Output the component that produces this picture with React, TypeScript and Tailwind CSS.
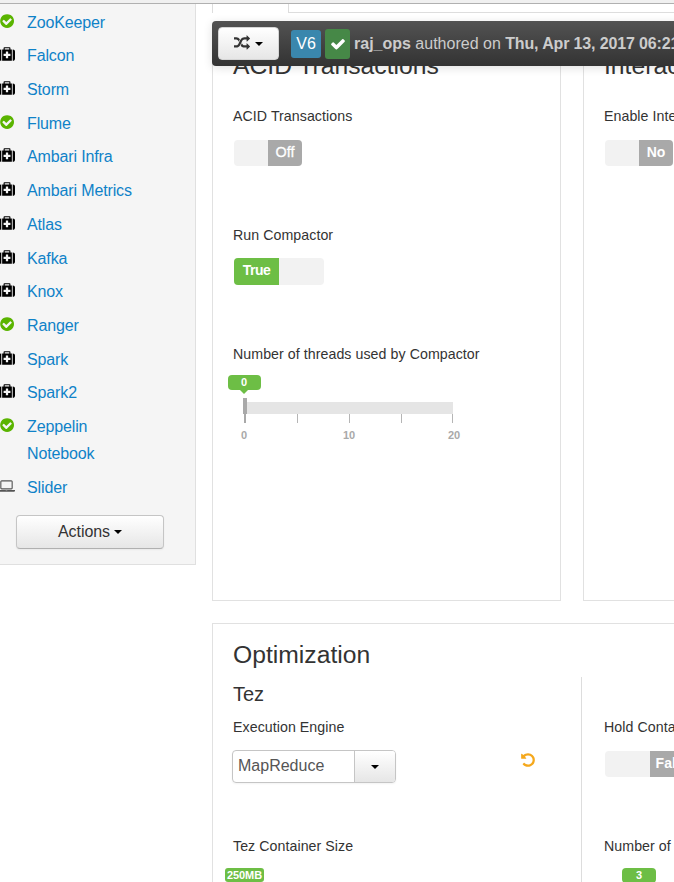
import React from "react";

const MEDKIT =
  "M1280 1088v-192q0-14-9-23t-23-9h-224v-224q0-14-9-23t-23-9h-192q-14 0-23 9t-9 23v224h-224q-14 0-23 9t-9 23v192q0 14 9 23t23 9h224v224q0 14 9 23t23 9h192q14 0 23-9t9-23v-224h224q14 0 23-9t9-23zM640 384h512v-128h-512v128zM256 384v1280h-32q-92 0-158-66t-66-158v-832q0-92 66-158t158-66h32zM1440 384v1280h-1088v-1280h160v-160q0-40 28-68t68-28h576q40 0 68 28t28 68v160h160zM1792 608v832q0 92-66 158t-158 66h-32v-1280h32q92 0 158 66t66 158z";
const CHECK_CIRCLE =
  "M1412 734q0-28-18-46l-91-90q-19-19-45-19t-45 19l-408 407-226-226q-19-19-45-19t-45 19l-91 90q-18 18-18 46 0 27 18 45l362 362q19 19 45 19 27 0 46-19l543-543q18-18 18-45zm252 162q0 209-103 385.5t-279.5 279.5-385.5 103-385.5-103-279.5-279.5-103-385.5 103-385.5 279.5-279.5 385.5-103 385.5 103 279.5 279.5 103 385.5z";
const CHECK =
  "M1671 566q0 40-28 68l-724 724-136 136q-28 28-68 28t-68-28l-136-136-362-362q-28-28-28-68t28-68l136-136q28-28 68-28t68 28l294 295 656-657q28-28 68-28t68 28l136 136q28 28 28 68z";
const UNDO =
  "M1664 896q0 156-61 298t-164 245-245 164-298 61q-172 0-327-72.5t-264-204.5q-7-10-6.5-22.5t8.5-20.5l137-138q10-9 25-9 16 2 23 12 73 95 179 147t225 52q104 0 198.5-40.5t163.5-109.5 109.5-163.5 40.5-198.5-40.5-198.5-109.5-163.5-163.5-109.5-198.5-40.5q-98 0-188 35.5t-160 101.5l137 138q31 30 14 69-17 40-59 40h-448q-26 0-45-19t-19-45v-448q0-42 40-59 39-17 69 14l130 129q107-101 244.5-156.5t284.5-55.5q156 0 298 61t245 164 164 245 61 298z";
const RANDOM =
  "M666 481q-60 92-137 273-22-45-37-72.5t-40.5-63.5-51-56.5-63-35-81.5-14.5h-224q-14 0-23-9t-9-23v-192q0-14 9-23t23-9h224q250 0 410 225zm1126 799q0 14-9 23l-320 320q-9 9-23 9-13 0-22.5-9.5t-9.5-22.5v-192q-32 0-85 .5t-81 1-73-1-71-5-64-10.5-63-18.5-58-28.5-59-40-55-53.5-56-69.5q59-93 136-273 22 45 37 72.5t40.5 63.5 51 56.5 63 35 81.5 14.5h256v-192q0-14 9-23t23-9q12 0 24 10l319 319q9 9 9 23zm0-896q0 14-9 23l-320 320q-9 9-23 9-13 0-22.5-9.5t-9.5-22.5v-192h-256q-48 0-87 15t-69 45-51 61.5-45 77.5q-32 62-78 171-29 66-49.5 111t-54 105-64 100-74 83-90 68.5-106.5 42-128 16.5h-224q-14 0-23-9t-9-23v-192q0-14 9-23t23-9h224q48 0 87-15t69-45 51-61.5 45-77.5q32-62 78-171 29-66 49.5-111t54-105 64-100 74-83 90-68.5 106.5-42 128-16.5h256v-192q0-14 9-23t23-9q12 0 24 10l319 319q9 9 9 23z";
const LAPTOP =
  "M416 1280q-66 0-113-47t-47-113v-704q0-66 47-113t113-47h1088q66 0 113 47t47 113v704q0 66-47 113t-113 47h-1088zm-32-864v704q0 13 9.5 22.5t22.5 9.5h1088q13 0 22.5-9.5t9.5-22.5v-704q0-13-9.5-22.5t-22.5-9.5h-1088q-13 0-22.5 9.5t-9.5 22.5zm1376 928h160v96q0 40-47 68t-113 28h-1600q-66 0-113-28t-47-68v-96h1760zm-720 96q16 0 16-16t-16-16h-160q-16 0-16 16t16 16h160z";

function Icon({ d, className, box = "0 0 1792 1792" }: { d: string; className: string; box?: string }) {
  return (
    <svg viewBox={box} className={className} fill="currentColor" fillRule="evenodd">
      <path d={d} />
    </svg>
  );
}

function Caret() {
  return <span className="h-0 w-0 border-x-4 border-t-4 border-x-transparent border-t-black" />;
}

type Kind = "ok" | "kit" | "laptop";
const services: { name: string; kind: Kind }[] = [
  { name: "ZooKeeper", kind: "ok" },
  { name: "Falcon", kind: "kit" },
  { name: "Storm", kind: "kit" },
  { name: "Flume", kind: "ok" },
  { name: "Ambari Infra", kind: "kit" },
  { name: "Ambari Metrics", kind: "kit" },
  { name: "Atlas", kind: "kit" },
  { name: "Kafka", kind: "kit" },
  { name: "Knox", kind: "kit" },
  { name: "Ranger", kind: "ok" },
  { name: "Spark", kind: "kit" },
  { name: "Spark2", kind: "kit" },
  { name: "Zeppelin Notebook", kind: "ok" },
  { name: "Slider", kind: "laptop" },
];

function StatusIcon({ kind }: { kind: Kind }) {
  if (kind === "ok") return <Icon d={CHECK_CIRCLE} className="-ml-[9px] mt-[4px] size-[16.2px] shrink-0 text-[#5ab400]" />;
  if (kind === "kit") return <Icon d={MEDKIT} className="-ml-[9px] mt-[4px] size-[16px] shrink-0 text-black" />;
  return <Icon d={LAPTOP} box="0 0 1920 1792" className="-ml-[10px] mt-[4px] h-4 w-[17px] shrink-0 text-[#555]" />;
}

function Sidebar() {
  return (
    <aside className="h-[561px] w-[196px] shrink-0 border-r border-b border-[#e0e0e0] bg-[#f5f5f5] pt-[4.5px]">
      <ul>
        {services.map((s) => (
          <li key={s.name} className="flex items-start pb-[6.73px] pl-2 leading-[27px]">
            <StatusIcon kind={s.kind} />
            <a className={"ml-auto w-[168px] text-[16px] tracking-[-0.13px] text-[#0f82c8] " + (s.name.startsWith("Ambari") ? "pr-0" : "pr-[60px]")}>
              {s.name}
            </a>
          </li>
        ))}
      </ul>
      <button className="mt-[7.5px] ml-4 flex h-[34px] w-[148px] items-center justify-center gap-1 rounded border border-[#c5c5c5] border-b-[#b0b0b0] bg-linear-to-b from-white to-[#e6e6e6] pb-px text-[16px] tracking-[-0.05px] text-[#333] shadow-xs">
        Actions <Caret />
      </button>
    </aside>
  );
}

function Label({ children }: { children: React.ReactNode }) {
  return <div className="h-5 text-[14.2px] leading-5 tracking-[0.06px] whitespace-nowrap text-[#333]">{children}</div>;
}

function OffSwitch({ text, wide = false }: { text: string; wide?: boolean }) {
  return (
    <div className={"ml-px flex h-[26px] overflow-hidden rounded-[4px] bg-[#f2f2f2] " + (wide ? "w-[90px]" : "w-[68px]")}>
      <div className="w-1/2" />
      <div className={"w-1/2 bg-[#a9a9a9] text-center leading-[25px] text-white " + (text === "Off" ? "text-[14.4px] [-webkit-text-stroke:0.3px_white]" : "text-[14px] font-bold") + (wide ? " pl-[2px]" : "")}>{text}</div>
    </div>
  );
}

function Slider() {
  return (
    <div className="-ml-[5px] w-[240px] text-[11px] font-bold">
      <div className="h-[15px] w-[33px] rounded-[4px] bg-[#6dbe45] text-center leading-[15px] text-white">
        <span className="-ml-px">0</span>
      </div>
      <div className="ml-[12px] h-0 w-0 border-x-4 border-t-4 border-x-transparent border-t-[#6dbe45]" />
      <div className="mt-[4px] ml-[15px] flex h-4 items-end">
        <div className="h-4 w-1 bg-[#a9a9a9]" />
        <div className="h-3 w-[206px] bg-[#e5e5e5]" />
      </div>
      <div className="ml-[16px] flex h-[9px]">
        <i className="w-0.5 bg-[#a9a9a9]" />
        <i className="ml-[51px] w-px bg-[#b5b5b5]" />
        <i className="ml-[51px] w-px bg-[#b5b5b5]" />
        <i className="ml-[51px] w-px bg-[#b5b5b5]" />
        <i className="ml-[50px] w-px bg-[#b5b5b5]" />
      </div>
      <div className="mt-[4px] ml-[6px] flex w-[230px] justify-between leading-4 text-[#a9a9a9]">
        <span className="w-5 text-center">0</span>
        <span className="w-5 text-center">10</span>
        <span className="w-5 text-center">20</span>
      </div>
    </div>
  );
}

function VersionBar() {
  return (
    <div className="absolute top-[21px] left-[212px] flex h-[45px] w-[500px] items-center rounded-[4px] bg-linear-to-b from-[#535353] to-[#333] pl-[6px] text-[16px] whitespace-nowrap text-[#ccc] shadow-[0_2px_10px_rgba(0,0,0,0.12)]">
      <button className="flex h-[33px] w-[61px] items-center justify-center gap-[5px] rounded-[4px] border border-[#d5d5d5] bg-linear-to-b from-white to-[#e6e6e6] text-[#333]">
        <Icon d={RANDOM} className="mb-0.5 size-4" />
        <Caret />
      </button>
      <span className="ml-3 flex h-7 w-[30px] items-center justify-center rounded-[3px] bg-[#3a87ad] text-white">V6</span>
      <span className="ml-1 flex h-[30px] w-[25px] items-center justify-center rounded-[3px] bg-[#468847] text-white">
        <Icon d={CHECK} className="size-4" />
      </span>
      <span className="ml-1">
        <b>raj_ops</b> authored on <b className="tracking-[-0.14px]">Thu, Apr 13, 2017 06:21</b>
      </span>
    </div>
  );
}

export default function App() {
  return (
    <div className="relative h-[882px] w-[674px] overflow-hidden bg-white font-['Liberation_Sans',Arial,sans-serif]">
      <div className="h-1 border-b border-[#b0b0b0] bg-[#f0f0f0]" />
      <div className="flex items-start">
        <Sidebar />
        <main className="ml-4 w-[740px] shrink-0">
          <div className="flex h-[9px]">
            <div className="w-[77px] border-x border-[#ddd]" />
            <div className="grow border-b border-[#ddd]" />
          </div>
          <div className="mt-[23px] flex gap-[22px]">
            <section className="h-[565px] w-[349px] border border-[#e1e1e1] pt-[13px] pl-5">
              <h2 className="h-[32px] text-[24.7px] leading-8 text-[#333]">ACID Transactions</h2>
              <div className="mt-[24px]"><Label>ACID Transactions</Label></div>
              <div className="h-[99px] pt-[14px]"><OffSwitch text="Off" /></div>
              <Label>Run Compactor</Label>
              <div className="h-[99px] pt-[13px]">
                <div className="ml-px flex h-[27px] w-[90px] overflow-hidden rounded-[4px] bg-[#f2f2f2]">
                  <div className="w-1/2 bg-[#6dbe45] text-center text-[14px] leading-[25px] font-bold tracking-[-0.5px] text-white">True</div>
                </div>
              </div>
              <Label>Number of threads used by Compactor</Label>
              <div className="pt-[11px]"><Slider /></div>
            </section>
            <section className="h-[565px] w-[349px] border border-[#e1e1e1] pt-[13px] pl-5">
              <h2 className="h-[32px] text-[24.7px] leading-8 whitespace-nowrap text-[#333]">Interactive Query</h2>
              <div className="mt-[24px]"><Label>Enable Interactive Query</Label></div>
              <div className="pt-[14px]"><OffSwitch text="No" /></div>
            </section>
          </div>
          <section className="mt-[22px] h-[300px] border border-[#e1e1e1]">
            <h2 className="h-[53px] pt-[15px] pl-5 text-[24.7px] leading-8 text-[#333]">Optimization</h2>
            <div className="flex h-[246px]">
              <div className="w-[369px] border-r border-[#ddd] pl-5">
                <h3 className="h-10 pt-[3px] text-[20px] leading-7 text-[#333]">Tez</h3>
                <Label>Execution Engine</Label>
                <div className="flex h-[99px] items-start pt-[13px]">
                  <div className="-ml-px flex h-[33px] w-[164px] rounded-[4px] border border-[#c5c5c5] shadow-xs">
                    <div className="w-[121px] pl-[5px] text-[16px] leading-[29px] text-[#555]">MapReduce</div>
                    <button className="flex grow items-center justify-center rounded-r-[3px] border-l border-[#c5c5c5] bg-linear-to-b from-white to-[#e6e6e6]"><Caret /></button>
                  </div>
                  <Icon d={UNDO} className="mt-0.5 ml-[124px] size-4 text-[#f5a81c]" />
                </div>
                <Label>Tez Container Size</Label>
                <div className="mt-[12px] -ml-2 h-[14px] w-[39px] rounded-[3px] bg-[#6dbe45] text-center text-[11px] leading-[14px] font-bold tracking-[-0.1px] text-white">250MB</div>
              </div>
              <div className="pt-10 pl-[22px]">
                <Label>Hold Containers to Reduce Latency</Label>
                <div className="h-[99px] pt-[14px]"><OffSwitch text="False" wide /></div>
                <Label>Number of Containers Held</Label>
                <div className="mt-[12px] ml-[18px] h-[15px] w-[34px] rounded-[4px] bg-[#6dbe45] text-center text-[11px] leading-[14px] font-bold text-white">3</div>
              </div>
            </div>
          </section>
        </main>
      </div>
      <VersionBar />
    </div>
  );
}
